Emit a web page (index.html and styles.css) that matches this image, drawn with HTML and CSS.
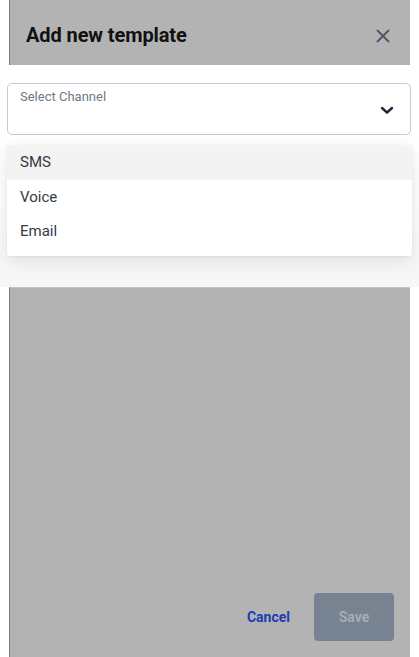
FILE: index.html
```html
<!DOCTYPE html>
<html>
<head>
<meta charset="utf-8">
<link rel="stylesheet" href="styles.css">
</head>
<body>
<div class="page">
  <header class="header">
    <h1 class="title">Add new template</h1>
    <button class="close" aria-label="Close">
      <svg width="14" height="14" viewBox="0 0 14 14"><path d="M1.5 1.5 L12.5 12.5 M12.5 1.5 L1.5 12.5" stroke="#4b5866" stroke-width="1.9" stroke-linecap="round" fill="none"/></svg>
    </button>
  </header>
  <section class="select-area">
    <div class="select">
      <span class="select-label">Select Channel</span>
      <svg class="chevron" width="14" height="9" viewBox="0 0 14 9"><path d="M2 2 L7 6.5 L12 2" stroke="#1f2a38" stroke-width="2.4" stroke-linecap="round" stroke-linejoin="round" fill="none"/></svg>
    </div>
    <ul class="menu">
      <li class="item active">SMS</li>
      <li class="item">Voice</li>
      <li class="item">Email</li>
    </ul>
  </section>
  <section class="body">
    <div class="footer">
      <button class="cancel">Cancel</button>
      <button class="save">Save</button>
    </div>
  </section>
</div>
</body>
</html>
```
FILE: styles.css
```css
html, body {
  margin: 0;
  padding: 0;
  background: #ffffff;
  font-family: Roboto, "Liberation Sans", Arial, sans-serif;
}
.page {
  width: 419px;
  height: 657px;
  display: flex;
  flex-direction: column;
  overflow: hidden;
}
.header {
  height: 65px;
  margin-left: 9px;
  width: 401px;
  box-sizing: border-box;
  background: #b3b3b3;
  border-left: 1px solid #7a7a7a;
  display: flex;
  align-items: center;
  justify-content: space-between;
  padding: 6px 20px 0 16px;
  flex-shrink: 0;
}
.title {
  margin: 0;
  font-size: 20px;
  font-weight: 700;
  color: #111111;
  letter-spacing: -0.1px;
  padding-bottom: 1px;
}
.close {
  border: 0;
  background: transparent;
  padding: 0;
  display: flex;
  margin-top: 1px;
}
.select-area {
  height: 222px;
  flex-shrink: 0;
  background: linear-gradient(#ffffff, #ffffff 60%, #f6f6f6);
  padding: 18px 8px 0 7px;
  box-sizing: border-box;
  display: flex;
  flex-direction: column;
  gap: 10px;
}
.select {
  height: 52px;
  box-sizing: border-box;
  border: 1px solid #c3cad2;
  border-radius: 5px;
  background: #ffffff;
  display: flex;
  justify-content: space-between;
  align-items: flex-start;
  padding: 5px 16px 0 12px;
}
.select-label {
  font-size: 13px;
  color: #6d7885;
}
.chevron {
  margin-top: 17px;
}
.menu {
  list-style: none;
  margin: 0;
  padding: 0 0 7px 0;
  background: #ffffff;
  border-radius: 3px;
  box-shadow: 0 6px 20px rgba(0, 0, 0, 0.10), 0 1px 3px rgba(0, 0, 0, 0.06);
  margin-right: -1px;
}
.item {
  height: 34.5px;
  display: flex;
  align-items: center;
  padding-left: 13px;
  font-size: 15px;
  color: #333a44;
}
.item.active {
  background: #f3f3f3;
}
.body {
  flex: 1;
  margin-left: 9px;
  width: 401px;
  box-sizing: border-box;
  background: #b3b3b3;
  border-left: 1px solid #7a7a7a;
  border-top: 1px solid #c4c4c4;
  display: flex;
  flex-direction: column;
  justify-content: flex-end;
}
.footer {
  display: flex;
  justify-content: flex-end;
  align-items: center;
  gap: 24px;
  padding: 0 16px 16px 0;
}
.cancel {
  border: 0;
  background: transparent;
  font-family: Roboto, "Liberation Sans", Arial, sans-serif;
  font-size: 14px;
  font-weight: 700;
  color: #1a3db5;
  padding: 0;
}
.save {
  width: 80px;
  height: 48px;
  border: 0;
  border-radius: 4px;
  background: #788391;
  color: #a4acb6;
  font-family: Roboto, "Liberation Sans", Arial, sans-serif;
  font-size: 14px;
  font-weight: 700;
}
```
